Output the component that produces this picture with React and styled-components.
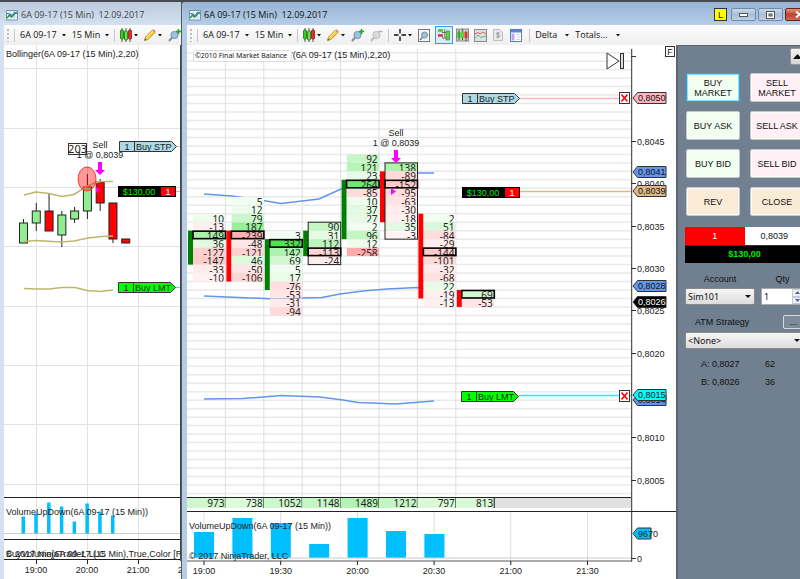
import React from 'react'
import styled, { createGlobalStyle, css } from 'styled-components'

const ui = '"Open Sans", "Noto Sans", sans-serif'
const arial = '"Liberation Sans", Arial, sans-serif'
const tahoma = '"Noto Sans", "Open Sans", sans-serif'

/* ---------- data ---------- */

const COL = 38.4
const ROW = 8.475
const rowY = (k) => 7.7 + k * ROW

// start: first price row, side: [from row, to row, colour], poc: row with the heavy frame
const footprint = [
  { start: 19, poc: 21, side: [21, 25, 'green'], cells: [10, -13, 149, 36, -127, -147, -33, -10] },
  { start: 17, poc: 21, side: [21, 27, 'red'], cells: [5, 12, 79, 187, -239, -48, -121, 46, -50, -106] },
  { start: 21, poc: 22, side: [22, 28, 'green'], cells: [3, 332, 142, 69, 5, 17, -76, -53, -31, -94] },
  { start: 20, poc: 23, side: [21, 24, 'green'], cells: [90, 31, 112, -113, -24], framed: true },
  { start: 12, poc: 15, side: [15, 22, 'green'], cells: [92, 121, 23, 264, -85, 10, 37, 27, 2, 96, 12, -258] },
  { start: 13, poc: 15, side: [14, 20, 'red'], cells: [138, -89, -152, -95, -63, -30, -18, 35, -3], framed: true },
  { start: 19, poc: 23, side: [19, 29, 'red'], cells: [2, 51, -84, -29, -144, -101, -32, -68, 22, -19, -13] },
  { start: 28, poc: 28, side: [28, 30, 'red'], cells: [69, -53] },
]

const totals = [973, 738, 1052, 1148, 1489, 1212, 797, 813]
const volumes = [26, 40, 35, 14, 40, 27, 24]
const times = ['19:00', '19:30', '20:00', '20:30', '21:00', '21:30']

const priceLabels = [
  ['0,8045', 97],
  ['0,8040', 139],
  ['0,8035', 182],
  ['0,8030', 224],
  ['0,8025', 266],
  ['0,8020', 309],
  ['0,8010', 393],
  ['0,8005', 436],
]

const priceTags = [
  { text: '0,8050', y: 53, fill: '#ffb6c1' },
  { text: '0,8041', y: 127, fill: '#6495ed' },
  { text: '0,8039', y: 146, fill: '#deb887' },
  { text: '0,8028', y: 241, fill: '#6495ed' },
  { text: '0,8026', y: 257, fill: '#000', color: '#fff' },
  { text: '0,8014', y: 355, fill: '#6495ed' },
  { text: '0,8015', y: 350, fill: '#0ff' },
]

// open/close body top and bottom, wick top and bottom
const candles = [
  ['up', 178, 198, 174, 198],
  ['up', 166, 178, 158, 186],
  ['down', 166, 186, 149, 186],
  ['up', 170, 190, 166, 202],
  ['up', 166, 174, 162, 178],
  ['up', 142, 166, 129, 174],
  ['down', 137, 158, 134, 166],
  ['down', 158, 194, 158, 198],
  ['down', 194, 198, 194, 198],
]
const smallVolumes = [17, 20, 31, 27, 12, 30, 22, 18]

const shade = (v) => {
  const a = v > 0 ? Math.min(v / 332, 1) * 0.93 + 0.07 : Math.min(-v / 550, 1) + 0.07
  const base = v > 0 ? [80, 228, 80] : [255, 100, 100]
  return `rgb(${base.map((c) => Math.round(255 - (255 - c) * a)).join(',')})`
}

/* ---------- icons ---------- */

const ChartIcon = () => (
  <svg width="12" height="12" viewBox="0 0 12 12">
    <rect x="0.5" y="1.5" width="11" height="9.5" fill="#eef6fb" stroke="#7d95ab" />
    <path d="M1 5h10M1 8h10M4.5 2v9M8 2v9" stroke="#b8cddc" strokeWidth="0.6" />
    <path d="M1 9l2.5-3 2 2 3-4.5 3 1" fill="none" stroke="#1f9c3a" strokeWidth="1.3" />
    <path d="M1 4.5l3 .5 3 2.5 4-5" fill="none" stroke="#2b6cc4" strokeWidth="1" />
  </svg>
)

const CandlesIcon = () => (
  <svg width="12" height="14" viewBox="0 0 12 14">
    <path d="M2 0v14M6 0v14M10 0v14" stroke="#333" strokeWidth="0.8" />
    <rect x="0.5" y="2" width="3" height="9" rx="1" fill="#39c824" stroke="#16700d" strokeWidth="0.8" />
    <rect x="4.5" y="3" width="3" height="9" rx="1" fill="#6fe052" stroke="#16700d" strokeWidth="0.8" />
    <rect x="8.5" y="2" width="3" height="9" rx="1" fill="#e5302b" stroke="#8c1512" strokeWidth="0.8" />
  </svg>
)

const PencilIcon = () => (
  <svg width="12" height="12" viewBox="0 0 12 12">
    <path d="M0.5 11.5l1-3.5L8.5 1l2.5 2.5L4 10.5z" fill="#f5c93a" stroke="#b98a1c" strokeWidth="0.8" />
    <path d="M2.5 8.5L9 2" stroke="#fff2a8" strokeWidth="1" />
    <path d="M8.5 1l1-.7 2.2 2.2-.7 1z" fill="#e27a6a" />
    <path d="M0.5 11.5l.5-1.8 1.3 1.3z" fill="#333" />
  </svg>
)

const LensIcon = ({ sign, muted }) => (
  <svg width="13" height="13" viewBox="0 0 13 13">
    <path d="M4.5 8L1 12" stroke={muted ? '#bbb' : '#8a8f96'} strokeWidth="2" />
    <circle cx="6.5" cy="6" r="3.6" fill={muted ? '#d9d9d9' : '#9cc3e2'} stroke={muted ? '#bdbdbd' : '#7693ab'} />
    {sign === 'plus' && <path d="M10.5 0v5M8 2.5h5" stroke="#17a81e" strokeWidth="1.6" />}
    {sign === 'minus' && <path d="M8.5 2.5h4" stroke="#b0b0b0" strokeWidth="1.4" />}
  </svg>
)

const CrossIcon = () => (
  <svg width="12" height="12" viewBox="0 0 12 12">
    <path d="M6 0v4.5M6 7.5V12M0 6h4.5M7.5 6H12" stroke="#111" strokeWidth="1.4" />
  </svg>
)

const FramedLensIcon = () => (
  <svg width="12" height="13" viewBox="0 0 12 13">
    <rect x="0.5" y="0.5" width="11" height="12" fill="#f7f7f7" stroke="#777" />
    <path d="M5 8l-3 3" stroke="#777" strokeWidth="1.5" />
    <circle cx="6.5" cy="6" r="3" fill="#9cc3e2" stroke="#7693ab" />
  </svg>
)

const TraderIcon = () => (
  <svg width="14" height="14" viewBox="0 0 14 14">
    <path d="M1 2.5h5" stroke="#3fc52b" strokeWidth="2.5" />
    <path d="M1 7.5h5" stroke="#e03030" strokeWidth="2.5" />
    <path d="M5 4.5h5M5 10h5" stroke="#666" />
    <path d="M7.5 1v9" stroke="#777" strokeWidth="0.8" />
    <rect x="9" y="3" width="3.5" height="9" fill="#5ed33f" stroke="#2b7d18" strokeWidth="0.6" />
  </svg>
)

const BarsIcon = () => (
  <svg width="13" height="14" viewBox="0 0 13 14">
    <rect x="0.5" y="1" width="12" height="12" fill="#cfcfcf" stroke="#888" />
    <path d="M3 2v10M6.5 1v11M10 3v10" stroke="#333" strokeWidth="0.8" />
    <rect x="1.5" y="4" width="3" height="6" fill="#39b028" />
    <rect x="5" y="3" width="3" height="7" fill="#5ed33f" />
    <rect x="8.5" y="4" width="3" height="6" fill="#e03030" />
  </svg>
)

const LinesIcon = () => (
  <svg width="13" height="13" viewBox="0 0 13 13">
    <rect x="0.5" y="0.5" width="12" height="12" fill="#dde3e3" stroke="#8b8b8b" />
    <path d="M1 5l3-1.5 2 1.5 3-2 3 2" fill="none" stroke="#d96060" />
    <path d="M1 9.5L4 6l3 2.5L12 7" fill="none" stroke="#61b08a" />
  </svg>
)

const DollarIcon = () => (
  <svg width="10" height="12" viewBox="0 0 10 12">
    <path d="M0.5 0.5h6.5L9.5 3v8.5h-9z" fill="#e9e9e9" stroke="#bdbdbd" />
    <path d="M6.7 4.3C6 3.3 3.4 3.5 3.4 4.8S6.7 5.9 6.7 7.2 4 8.8 3.2 7.7M5 2.8v6.4" fill="none" stroke="#999" />
  </svg>
)

const PanelIcon = () => (
  <svg width="12" height="13" viewBox="0 0 12 13">
    <rect x="0.5" y="0.5" width="11" height="12" fill="#fff" stroke="#5b7fae" />
    <rect x="1" y="1" width="10" height="2.5" fill="#4d86d8" />
    <rect x="1.5" y="4.5" width="3" height="7" fill="#b7a5f0" />
    <path d="M6 5.5h4M6 8h4M6 10.5h4" stroke="#c9d3dd" />
  </svg>
)

const Caret = () => (
  <svg width="4" height="3" viewBox="0 0 4 3">
    <path d="M0 0h4L2 2.5z" fill="#111" />
  </svg>
)

/* ---------- chart parts ---------- */

const OrderTag = ({ x, y, label, fill }) => (
  <g transform={`translate(${x} ${y})`}>
    <path d="M0.5 0.5H52.5L57.5 5.5L52.5 10.5H0.5Z" fill={fill} stroke="#333" />
    <path d="M15.5 0.5v10" stroke="#333" />
    <Label x="8" y="9" $anchor="middle">1</Label>
    <Label x="17" y="9">{label}</Label>
  </g>
)

const ProfitTag = ({ x, y }) => (
  <g transform={`translate(${x} ${y})`}>
    <rect width="58" height="11" fill="#000" />
    <rect x="43" y="1" width="14" height="9" fill="#f00" />
    <Label x="21" y="9" $anchor="middle" $fill="#00f000">$130,00</Label>
    <Label x="50" y="9" $anchor="middle" $fill="#fff">1</Label>
  </g>
)

const CancelBox = ({ y }) => (
  <g transform={`translate(-12 ${y})`}>
    <rect x="0.5" y="0.5" width="10" height="11" fill="#fff" stroke="#333" />
    <path d="M2.5 2.5l6 7M8.5 2.5l-6 7" stroke="#f00" strokeWidth="1.6" />
  </g>
)

const PriceTag = ({ y, text, fill, color = '#111', width = 33 }) => (
  <g transform={`translate(2 ${y})`}>
    <path d={`M0 0L4.5 -5.5H${width}V5.5H4.5Z`} fill={fill} stroke="#333" />
    <Label x="5" y="3" $fill={color}>{text}</Label>
  </g>
)

const SellMark = ({ x, y }) => (
  <g transform={`translate(${x} ${y})`}>
    <Label $anchor="middle">Sell</Label>
    <Label y="10" $anchor="middle">1 @ 0,8039</Label>
    <path d="M-2 14h4v8h3l-5 5-5-5h3z" fill="#f0f" />
  </g>
)

const FootprintColumn = ({ col, index }) => {
  const x = index * COL
  const [from, to, color] = col.side
  const top = rowY(col.start)
  return (
    <g>
      <rect x={x + 1} y={rowY(from)} width="5" height={(to - from) * ROW} fill={color === 'red' ? '#f00' : '#008000'} />
      {col.cells.map((value, i) => (
        <svg key={i} x={x + 6} y={top + i * ROW} width="32.5" height={ROW}>
          <rect width="100%" height="100%" fill={shade(value)} />
          <Digits x="31" y="9">{value}</Digits>
        </svg>
      ))}
      {col.framed && (
        <rect x={x + 6} y={top} width="32.5" height={col.cells.length * ROW} fill="none" stroke="#222" />
      )}
      <rect x={x + 6} y={rowY(col.poc) + 0.5} width="32.5" height={ROW - 1} fill="none" stroke="#000" strokeWidth="1.6" />
    </g>
  )
}

const MainPlot = () => (
  <Plot height="534" role="img" aria-label="6A 09-17 footprint chart">
    {Array.from({ length: 53 }, (_, k) => (
      <line key={k} x1="0" x2="100%" y1={rowY(k)} y2={rowY(k)} stroke="#e9e9e9" strokeWidth="1.5" />
    ))}
    {[1, 2, 3, 4, 5, 6, 7].map((i) => (
      <line key={i} x1={i * COL} x2={i * COL} y1="4" y2="452" stroke="#dedede" />
    ))}
    {times.map((t, i) => (
      <line key={t} x1={17 + i * 76.7} x2={17 + i * 76.7} y1="467" y2="516" stroke="#dedede" />
    ))}

    <Curve d="M17 149L45 151L76 155.5L94 158.5L115 156L132 154L154 144L180 132L218 128H247" />
    <Curve d="M17 251L88 254L115 253L135 252.5L153 249L176 246L200 244L230 242.5L250 245" />
    <Curve d="M17 354L56 353.5L94 350.5L133 352L156 355L171 357.5L209 359L247 356" />

    {footprint.map((col, i) => (
      <FootprintColumn key={i} col={col} index={i} />
    ))}
    <path d="M204 143l5 3.5-5 3.5z" fill="#f0f" />
    <SellMark x="209" y="91" />

    <line x1="332" x2="100%" y1="53.5" y2="53.5" stroke="#ffb6c1" strokeWidth="1.5" />
    <line x1="332" x2="100%" y1="146.5" y2="146.5" stroke="#deb887" strokeWidth="1.5" />
    <line x1="332" x2="100%" y1="350.5" y2="350.5" stroke="#0ff" strokeWidth="1.5" />
    <OrderTag x="275" y="48" label="Buy STP" fill="#add8e6" />
    <ProfitTag x="275" y="142" />
    <OrderTag x="274" y="346" label="Buy LMT" fill="#0f0" />

    <rect x="0" y="453" width="100%" height="10" fill="#e0e0e0" />
    {totals.map((t, i) => (
      <g key={i}>
        <rect x={i * COL} y="453" width={COL} height="10" fill="#fff" />
        <rect x={i * COL} y="453" width={COL} height="10" fill="#50e450" fillOpacity={(t - 100) / 3200} />
        <line x1={(i + 1) * COL} x2={(i + 1) * COL} y1="452" y2="463" stroke="#111" />
        <Digits x={(i + 1) * COL - 1} y="462">{t}</Digits>
      </g>
    ))}
    <line x1="0" x2="100%" y1="452.5" y2="452.5" stroke="#222" />
    <line x1="0" x2="100%" y1="466.5" y2="466.5" stroke="#222" />

    {volumes.map((v, i) => (
      <rect key={i} x={7 + i * COL} y={513 - v} width="20" height={v} fill="#00bfff" />
    ))}
    <line x1="0" x2="100%" y1="513" y2="513" stroke="#ccc" />
    <line x1="0" x2="100%" y1="516" y2="516" stroke="#555" />
    {times.map((t, i) => (
      <g key={t}>
        <line x1={17 + i * 76.7} x2={17 + i * 76.7} y1="516" y2="520" stroke="#222" />
        <Label x={17 + i * 76.7} y="529" $anchor="middle">{t}</Label>
      </g>
    ))}
    <Label x="2" y="484">VolumeUpDown(6A 09-17 (15 Min))</Label>
    <Label x="2" y="514">© 2017 NinjaTrader, LLC</Label>
    <Label x="104" y="13">'(6A 09-17 (15 Min),2,20)</Label>
    <rect x="6.5" y="5.5" width="98" height="11" rx="2" fill="#fdfdfd" stroke="#ddd" />
    <Tiny x="8" y="13">©2010 Final Market Balance</Tiny>

    {/* pinned to the right edge of the plot */}
    <svg x="100%" overflow="visible">
      <CancelBox y="47" />
      <CancelBox y="345" />
      <path d="M-24 8v16l12-8z" fill="#fff" stroke="#333" />
      <rect x="-10.5" y="8.5" width="3" height="15" fill="#ddd" stroke="#333" />
    </svg>
  </Plot>
)

const PriceAxis = () => (
  <Axis width="45" height="534" role="img" aria-label="Price axis">
    <line x1="0.5" x2="0.5" y1="4" y2="517" stroke="#555" strokeWidth="1.5" />
    <line x1="0" x2="5" y1="11.5" y2="11.5" stroke="#333" />
    {priceLabels.map(([text, y]) => (
      <g key={text}>
        <line x1="0" x2="5" y1={y - 0.5} y2={y - 0.5} stroke="#333" />
        <Label x="6" y={y + 3}>{text}</Label>
      </g>
    ))}
    {priceTags.map((tag) => (
      <PriceTag key={tag.text} {...tag} />
    ))}
    <line x1="0" x2="45" y1="466.5" y2="466.5" stroke="#222" />
    <PriceTag y={488.5} text="" fill="#00bfff" width={18} />
    <Label x="7" y="492">9670</Label>
    <line x1="0" x2="5" y1="513.5" y2="513.5" stroke="#333" />
    <Label x="6" y="517">0</Label>
    <rect x="34.5" y="1.5" width="9" height="10" fill="#fff" stroke="#333" />
    <Label x="39" y="10" $anchor="middle">F</Label>
  </Axis>
)

const SmallPlot = () => (
  <Plot height="534" role="img" aria-label="6A 09-17 candlestick chart">
    {[23, 83, 142, 201, 261, 320, 379, 439].map((y) => (
      <line key={y} x1="0" x2="100%" y1={y + 0.5} y2={y + 0.5} stroke="#e2e2e2" />
    ))}
    {[32, 83, 134].map((x) => (
      <line key={x} x1={x + 0.5} x2={x + 0.5} y1="0" y2="514" stroke="#e2e2e2" />
    ))}
    {candles.map(([dir, top, bottom, high, low], i) => {
      const x = 19.5 + i * 12.78
      return (
        <g key={i}>
          <line x1={x} x2={x} y1={high} y2={low} stroke="#222" />
          <rect x={x - 4} y={top} width="8" height={bottom - top} fill={dir === 'up' ? '#90ee90' : '#f00'} stroke="#222" />
        </g>
      )
    })}
    <Curve $gold d="M20 150L32 147L45 148.5L58 151.5L70 149.5L80 143L90 138L97 136.5H109" />
    <Curve $gold d="M20 196.5L32 195.5L57 197L70 196L84 193L98 191.5L109 191" />
    <Curve $gold d="M20 243.5L32 244L45 244L58 242.5H71L83 245.5L96 246.5L109 245" />
    <ellipse cx="83" cy="134" rx="9" ry="12" fill="#f00" fillOpacity="0.4" stroke="#f33" />
    <rect x="64.5" y="98.5" width="18" height="11" fill="#fff" stroke="#333" />
    <Digits x="83" y="108" $big>203</Digits>
    <path d="M92 142l4 3-4 3z" fill="#f0f" />
    <SellMark x="96" y="103" />

    <line x1="170" x2="100%" y1="101.5" y2="101.5" stroke="#ffb6c1" />
    <line x1="170" x2="100%" y1="146.5" y2="146.5" stroke="#deb887" />
    <line x1="170" x2="100%" y1="242.5" y2="242.5" stroke="#0ff" />
    <OrderTag x="115" y="96" label="Buy STP" fill="#add8e6" />
    <ProfitTag x="114" y="141" />
    <OrderTag x="114" y="237" label="Buy LMT" fill="#0f0" />

    <line x1="0" x2="100%" y1="452.5" y2="452.5" stroke="#222" />
    <line x1="0" x2="100%" y1="488.5" y2="488.5" stroke="#ccc" />
    {smallVolumes.map((v, i) => (
      <rect key={i} x={17.5 + i * 12.78} y={488.5 - v} width="3.5" height={v} fill="#00bfff" />
    ))}
    <Label x="2" y="470">VolumeUpDown(6A 09-17 (15 Min))</Label>
    <line x1="0" x2="100%" y1="494.5" y2="494.5" stroke="#222" />
    <Label x="2" y="512">BuyVolume(6A 09-17 (15 Min),True,Color [Red]</Label>
    <Label x="2" y="512">© 2017 NinjaTrader, LLC</Label>
    <line x1="0" x2="100%" y1="514.5" y2="514.5" stroke="#222" />
    {['19:00', '20:00', '21:00', '22:00'].map((t, i) => (
      <g key={t}>
        <line x1={32.5 + i * 51} x2={32.5 + i * 51} y1="514" y2="519" stroke="#222" />
        <Label x={32 + i * 51} y="528" $anchor="middle">{t}</Label>
      </g>
    ))}
    <Label x="2" y="12">Bollinger(6A 09-17 (15 Min),2,20)</Label>
    <svg x="100%" overflow="visible">
      <line x1="-0.5" x2="-0.5" y1="0" y2="516" stroke="#444" />
    </svg>
  </Plot>
)

/* ---------- windows ---------- */

const CommonTools = () => (
  <>
    <Grip />
    <Separator />
    <ToolButton>6A 09-17<Caret /></ToolButton>
    <ToolButton>15 Min<Caret /></ToolButton>
    <Separator />
    <ToolButton $tight aria-label="Chart style"><CandlesIcon /><Caret /></ToolButton>
    <ToolButton $tight aria-label="Drawing tools"><PencilIcon /><Caret /></ToolButton>
    <ToolButton aria-label="Zoom in"><LensIcon sign="plus" /></ToolButton>
  </>
)

const OrderPanel = () => (
  <Panel>
    <PanelBody>
      <CollapseRow>
        <CollapseButton aria-label="Collapse">
          <svg width="9" height="5" viewBox="0 0 9 5"><path d="M0 5L4.5 0L9 5z" fill="#111" /></svg>
        </CollapseButton>
      </CollapseRow>
      <OrderGrid>
        <OrderButton $tone="#f0fff0" $active>BUY MARKET</OrderButton>
        <OrderButton $tone="#fff0f5">SELL MARKET</OrderButton>
        <OrderButton $tone="#f0fff0">BUY ASK</OrderButton>
        <OrderButton $tone="#fff0f5">SELL ASK</OrderButton>
        <OrderButton $tone="#f0fff0">BUY BID</OrderButton>
        <OrderButton $tone="#fff0f5">SELL BID</OrderButton>
        <OrderButton $tone="#faebd7">REV</OrderButton>
        <OrderButton $tone="#faebd7">CLOSE</OrderButton>
      </OrderGrid>
      <Position>
        <Size>1</Size>
        <Entry>0,8039</Entry>
      </Position>
      <Profit>$130,00</Profit>
      <Fields>
        <FieldLabel htmlFor="account">Account</FieldLabel>
        <FieldLabel htmlFor="qty">Qty</FieldLabel>
        <SelectBox>
          <select id="account" defaultValue="Sim101"><option>Sim101</option></select>
        </SelectBox>
        <NumberBox>
          <input id="qty" type="text" defaultValue="1" />
          <Spinner>
            <button aria-label="Increase"><svg width="5" height="3"><path d="M0 3L2.5 0L5 3z" fill="#4a62a8" /></svg></button>
            <button aria-label="Decrease"><svg width="5" height="3"><path d="M0 0h5L2.5 3z" fill="#4a62a8" /></svg></button>
          </Spinner>
        </NumberBox>
      </Fields>
      <StrategyRow>
        <FieldLabel htmlFor="atm">ATM Strategy</FieldLabel>
        <MoreButton aria-label="Strategy options">...</MoreButton>
      </StrategyRow>
      <SelectBox>
        <select id="atm" defaultValue="<None>"><option>{'<None>'}</option></select>
      </SelectBox>
      <Quotes>
        <dt>A: 0,8027</dt>
        <dd>62</dd>
        <dt>B: 0,8026</dt>
        <dd>36</dd>
      </Quotes>
    </PanelBody>
  </Panel>
)

const App = () => (
  <Desktop>
    <GlobalStyle />
    <BackWindow>
      <TitleBar $inactive>
        <ChartIcon />
        <Title>6A 09-17 (15 Min)  12.09.2017</Title>
      </TitleBar>
      <Toolbar><CommonTools /></Toolbar>
      <Content><SmallPlot /></Content>
    </BackWindow>
    <FrontWindow>
      <TitleBar>
        <ChartIcon />
        <Title>6A 09-17 (15 Min)  12.09.2017</Title>
        <WindowButtons>
          <LinkBadge>L</LinkBadge>
          <WindowButton aria-label="Minimize">
            <svg width="9" height="4"><rect x="0.5" y="0.5" width="8" height="3" fill="#fff" stroke="#555" /></svg>
          </WindowButton>
          <WindowButton aria-label="Maximize">
            <svg width="9" height="8">
              <rect x="0.5" y="0.5" width="8" height="7" fill="#fff" stroke="#555" />
              <rect x="3" y="3" width="3" height="2" fill="#a9bfd8" stroke="#555" />
            </svg>
          </WindowButton>
          <WindowButton $close aria-label="Close">
            <svg width="9" height="7"><path d="M1 0.5l7 6M8 0.5l-7 6" stroke="#fff" strokeWidth="2" /></svg>
          </WindowButton>
        </WindowButtons>
      </TitleBar>
      <Toolbar>
        <CommonTools />
        <ToolButton aria-label="Zoom out"><LensIcon sign="minus" muted /></ToolButton>
        <Separator />
        <ToolButton $tight aria-label="Cross hair"><CrossIcon /><Caret /></ToolButton>
        <ToolButton aria-label="Zoom frame"><FramedLensIcon /></ToolButton>
        <ToolGroup>
          <IconButton $selected aria-label="Chart trader"><TraderIcon /></IconButton>
          <IconButton aria-label="Data series"><BarsIcon /></IconButton>
          <IconButton aria-label="Indicators"><LinesIcon /></IconButton>
          <IconButton aria-label="Strategies"><DollarIcon /></IconButton>
          <IconButton aria-label="Properties"><PanelIcon /></IconButton>
        </ToolGroup>
        <Separator />
        <ToolButton $wide>Delta<Caret /></ToolButton>
        <ToolButton $wide>Totals...<Caret /></ToolButton>
      </Toolbar>
      <Content>
        <MainPlot />
        <PriceAxis />
        <OrderPanel />
      </Content>
    </FrontWindow>
  </Desktop>
)

export default App

/* ---------- styles ---------- */

const GlobalStyle = createGlobalStyle`
  * {
    box-sizing: border-box;
  }
  body {
    margin: 0;
    background: #fff;
    overflow: hidden;
  }
  button, input, select {
    margin: 0;
    padding: 0;
    border-radius: 0;
    font: inherit;
    color: inherit;
  }
`
const Desktop = styled.div`
  display: flex;
  min-height: 100vh;
  background: #4a4a4a;
`
const frame = css`
  display: flex;
  flex-direction: column;
  overflow: hidden;
  border-top: 2px solid #484c52;
`
const BackWindow = styled.section`
  ${frame};
  flex: 0 0 181px;
  padding-left: 4px;
  background: #d3e1f1;
`
const FrontWindow = styled.section`
  ${frame};
  flex: 1;
  min-width: 0;
  padding-left: 5px;
  border-left: 1px solid #555a61;
  border-top-left-radius: 5px;
  background: #b5cce6;
`
const TitleBar = styled.header`
  display: flex;
  align-items: center;
  flex: 0 0 23px;
  gap: 3px;
  margin-left: -5px;
  padding: 2px 0 0 7px;
  background: ${(p) => (p.$inactive ? 'linear-gradient(#bccbdc, #d3e1f1)' : 'linear-gradient(#98b4d2, #b5cde8)')};
  color: ${(p) => (p.$inactive ? '#444' : '#111')};
`
const Title = styled.h1`
  margin: 0;
  font: 400 9px/14px ${ui};
  white-space: pre;
`
const WindowButtons = styled.div`
  display: flex;
  align-items: center;
  gap: 2px;
  margin: 0 -13px 0 auto;
`
const LinkBadge = styled.button`
  width: 13px;
  height: 13px;
  margin-right: 2px;
  border: 1px solid #333;
  background: #ff0;
  font: 9px/10px ${arial};
`
const WindowButton = styled.button`
  display: flex;
  align-items: center;
  justify-content: center;
  width: ${(p) => (p.$close ? 28 : 25)}px;
  height: 13px;
  border: 1px solid ${(p) => (p.$close ? '#6b2219' : '#7089a5')};
  border-radius: 2px;
  background: ${(p) => (p.$close ? 'linear-gradient(#dd9787, #c0432c 50%, #cf6a50)' : 'linear-gradient(#c8d8ea, #a9bfd8 50%, #bdd1e8)')};
`
const Toolbar = styled.div`
  display: flex;
  align-items: center;
  flex: 0 0 20px;
  gap: 4px;
  padding-left: 3px;
  background: linear-gradient(#fcfcfc, #efefef);
  font: 9px/14px ${ui};
  color: #111;
`
const Grip = styled.span`
  flex: 0 0 3px;
  height: 13px;
  background: repeating-linear-gradient(#bbb 0 2px, transparent 2px 4px);
  border-right: 1px solid #fafafa;
`
const Separator = styled.span`
  flex: 0 0 1px;
  height: 13px;
  background: #c8c8c8;
`
const ToolButton = styled.button`
  display: flex;
  align-items: center;
  flex: none;
  gap: ${(p) => (p.$tight ? 2 : p.$wide ? 8 : 5)}px;
  padding: 0 1px;
  border: 0;
  background: none;
`
const ToolGroup = styled.div`
  display: flex;
`
const IconButton = styled.button`
  display: flex;
  align-items: center;
  justify-content: center;
  width: 18px;
  height: 18px;
  border: 1px solid ${(p) => (p.$selected ? '#3c9bf0' : 'transparent')};
  background: ${(p) => (p.$selected ? '#d9ebfb' : 'none')};
`
const Content = styled.main`
  display: flex;
  flex: 1;
  background: #fff;
`
const Plot = styled.svg`
  display: block;
  flex: 1;
  min-width: 0;
`
const Axis = styled.svg`
  display: block;
  flex: none;
`
const Label = styled.text`
  font: 9px ${arial};
  fill: ${(p) => p.$fill || '#222'};
  text-anchor: ${(p) => p.$anchor || 'start'};
  white-space: pre;
`
const Digits = styled.text`
  font: ${(p) => (p.$big ? 11 : 10)}px ${tahoma};
  fill: #222;
  text-anchor: end;
`
const Tiny = styled.text`
  font: 7px ${tahoma};
  fill: #222;
`
const Curve = styled.path`
  fill: none;
  stroke: ${(p) => (p.$gold ? '#bdb76b' : '#6495ed')};
  stroke-width: 1.5;
`
const Panel = styled.aside`
  flex: 0 0 124px;
  overflow: hidden;
  border-left: 2px solid #5c6772;
  border-top: 1px solid #5c6772;
  background: #708090;
  font: 9px/10px ${arial};
  color: #111;
`
const PanelBody = styled.div`
  width: 126px;
  padding: 2px 0 0 7px;
`
const CollapseRow = styled.div`
  display: flex;
  justify-content: flex-end;
  margin-bottom: 8px;
`
const CollapseButton = styled.button`
  display: flex;
  align-items: center;
  justify-content: center;
  width: 14px;
  height: 17px;
  border: 1px solid #999;
  border-radius: 2px;
  background: linear-gradient(#f5f5f5, #d5d5d5);
`
const OrderGrid = styled.div`
  display: grid;
  grid-template-columns: 54px 54px;
  gap: 9px 10px;
  padding-left: 1px;
`
const OrderButton = styled.button`
  height: 29px;
  padding: 0 4px;
  border: 1px solid ${(p) => (p.$active ? '#2ba5dc' : '#c4c8c8')};
  border-radius: 2px;
  background: ${(p) => p.$tone};
  box-shadow: inset 0 0 0 1px ${(p) => (p.$active ? '#8fdcf8' : '#fafafa')};
`
const Position = styled.div`
  display: flex;
  margin-top: 11px;
  line-height: 18px;
  text-align: center;
`
const Size = styled.span`
  flex: 1;
  background: #f00;
  color: #fff;
`
const Entry = styled.span`
  flex: 1;
  background: #fff;
`
const Profit = styled.div`
  border-top: 1px solid #333;
  background: #000;
  color: #00f000;
  font-weight: 700;
  line-height: 17px;
  text-align: center;
`
const Fields = styled.div`
  display: grid;
  grid-template-columns: 70px minmax(0, 1fr);
  gap: 4px 6px;
  margin-top: 11px;
`
const FieldLabel = styled.label`
  text-align: center;
`
const SelectBox = styled.div`
  position: relative;
  height: 17px;

  select {
    width: 100%;
    height: 100%;
    padding-left: 2px;
    border: 1px solid #8a8a8a;
    border-radius: 2px;
    appearance: none;
    background: linear-gradient(#f6f6f6, #dcdcdc);
    font-family: ${tahoma};
  }
  &:after {
    content: '';
    position: absolute;
    top: 7px;
    right: 4px;
    border: 3px solid transparent;
    border-top-color: #111;
    pointer-events: none;
  }
`
const NumberBox = styled.div`
  display: flex;
  height: 17px;
  border: 1px solid #aaa;
  background: #fff;

  input {
    flex: 1;
    min-width: 0;
    padding-left: 2px;
    border: 0;
    font-family: ${tahoma};
  }
`
const Spinner = styled.div`
  display: flex;
  flex-direction: column;
  flex: 0 0 11px;

  button {
    display: flex;
    align-items: center;
    justify-content: center;
    flex: 1;
    border: 1px solid #c5cad8;
    background: #eef0f6;
  }
`
const StrategyRow = styled.div`
  display: flex;
  align-items: center;
  justify-content: space-between;
  margin: 10px 0 3px;
  padding-left: 10px;
`
const MoreButton = styled.button`
  width: 21px;
  height: 14px;
  border: 1px solid #d5dbe0;
  border-radius: 2px;
  background: #7c8b9a;
`
const Quotes = styled.dl`
  display: grid;
  grid-template-columns: 64px 1fr;
  row-gap: 8px;
  margin: 10px 0 0 16px;

  dd {
    margin: 0;
  }
`
